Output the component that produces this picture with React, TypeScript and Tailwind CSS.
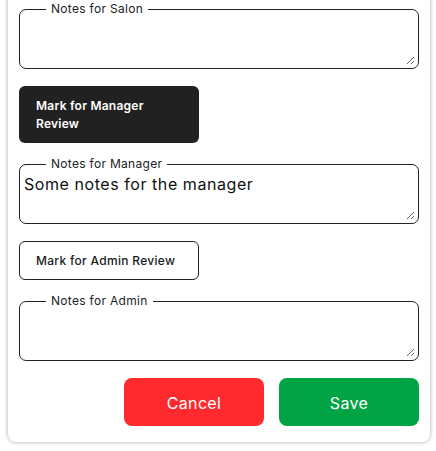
function NotesField({ label, value }: { label: string; value?: string }) {
  return (
    <fieldset className="rounded-[7px] border border-[#222222] px-[3px] pb-[3px]">
      <legend className="ml-[23px] px-[5px] text-[12px] leading-4 tracking-[0.025em] text-[#222222]">{label}</legend>
      <textarea
        defaultValue={value}
        className="block h-[48px] w-full resize-y px-[1px] py-0 text-[16px] leading-6 tracking-[0.035em] text-[#111111] outline-none"
      />
    </fieldset>
  );
}

export default function App() {
  return (
    <div className="min-h-[451px] overflow-hidden bg-white" style={{ fontFamily: '"Inter", "Noto Sans", sans-serif' }}>
      <div className="-mt-[15px] ml-[8px] mr-[6px] rounded-lg bg-white px-[11px] pt-[16px] pb-[16px] shadow-[0_0_4px_rgba(0,0,0,0.35)]">
        <NotesField label="Notes for Salon" />

        <button className="mt-[17px] flex h-[57px] w-[180px] items-center rounded-[6px] bg-[#212121] px-[17px] text-left text-[12px] leading-[18px] font-semibold tracking-[0.02em] text-white">
          Mark for Manager<br />Review
        </button>

        <div className="mt-[13px]">
          <NotesField label="Notes for Manager" value="Some notes for the manager" />
        </div>

        <button className="mt-[17px] flex h-[39px] w-[180px] items-center rounded-[6px] border border-[#222222] bg-white px-[16px] text-[12px] font-medium tracking-[0.025em] text-[#1a1a1a]">
          Mark for Admin Review
        </button>

        <div className="mt-[13px]">
          <NotesField label="Notes for Admin" />
        </div>

        <div className="mt-[17px] flex justify-end gap-[15px]">
          <button className="h-[48px] w-[140px] rounded-lg bg-[#ff2a2d] pt-[1px] text-[16px] tracking-[0.02em] text-white">Cancel</button>
          <button className="h-[48px] w-[140px] rounded-lg bg-[#00a444] pt-[1px] text-[16px] tracking-[0.02em] text-white">Save</button>
        </div>
      </div>
    </div>
  );
}
